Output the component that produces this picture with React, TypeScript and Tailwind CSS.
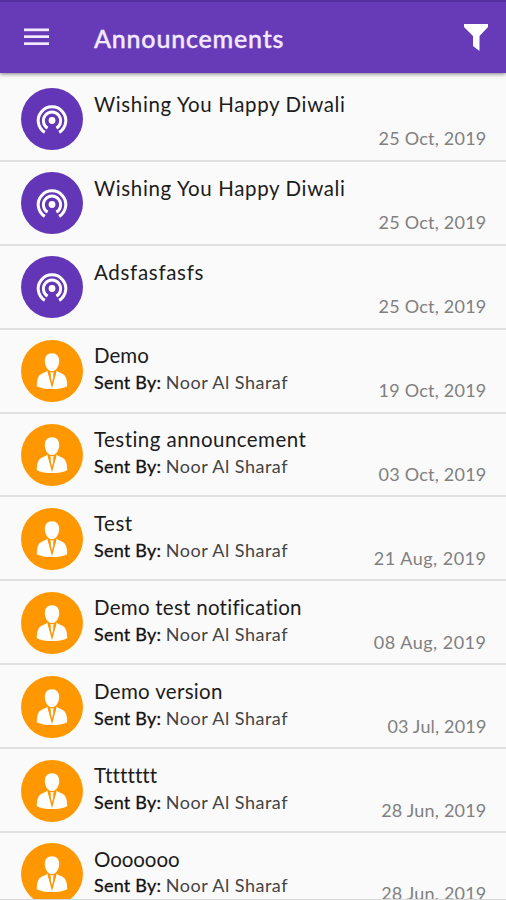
type Item = { title: string; ls: string; date: string; dls: string; sender?: string };

const sender = 'Noor Al Sharaf';

const items: Item[] = [
  { title: 'Wishing You Happy Diwali', ls: 'tracking-[0.63px]', date: '25 Oct, 2019', dls: 'tracking-[0.22px]' },
  { title: 'Wishing You Happy Diwali', ls: 'tracking-[0.63px]', date: '25 Oct, 2019', dls: 'tracking-[0.22px]' },
  { title: 'Adsfasfasfs', ls: 'tracking-[0.7px]', date: '25 Oct, 2019', dls: 'tracking-[0.22px]' },
  { title: 'Demo', ls: 'tracking-[0.05px]', date: '19 Oct, 2019', dls: 'tracking-[0.22px]', sender },
  { title: 'Testing announcement', ls: 'tracking-[0.45px]', date: '03 Oct, 2019', dls: 'tracking-[0.22px]', sender },
  { title: 'Test', ls: 'tracking-[0.5px]', date: '21 Aug, 2019', dls: 'tracking-[0.5px]', sender },
  { title: 'Demo test notification', ls: 'tracking-[0.26px]', date: '08 Aug, 2019', dls: 'tracking-[0.5px]', sender },
  { title: 'Demo version', ls: 'tracking-[0.33px]', date: '03 Jul, 2019', dls: 'tracking-[0.17px]', sender },
  { title: 'Tttttttt', ls: 'tracking-[0.13px]', date: '28 Jun, 2019', dls: 'tracking-[0.2px]', sender },
  { title: 'Ooooooo', ls: 'tracking-[-0.07px]', date: '28 Jun, 2019', dls: 'tracking-[0.2px]', sender },
];

function BroadcastIcon() {
  return (
    <svg viewBox="0 0 62 62" className="size-[62px] shrink-0">
      <circle cx="31" cy="31" r="31" fill="#6236b6" />
      <circle cx="31" cy="32.5" r="3.4" fill="#fff" />
      <g fill="none" stroke="#fff" strokeWidth="3">
        <path d="M26.6 40.1A8.6 8.6 0 1 1 35.4 40.1" />
        <path d="M23.8 44.4A13.8 13.8 0 1 1 38.2 44.4" />
      </g>
    </svg>
  );
}

function PersonIcon() {
  return (
    <svg viewBox="0 0 62 62" className="size-[62px] shrink-0">
      <circle cx="31" cy="31" r="31" fill="#ff9800" />
      <path
        fill="#fff"
        d="M31 13.2c4.5 0 7.3 3.1 7.2 7.7-.1 5.2-3.1 10.1-7.2 10.1s-7.1-4.9-7.2-10.1c-.1-4.6 2.700-7.700 7.200-7.700z"
      />
      <path
        fill="#fff"
        d="M26.3 30.6L31 45.8l4.7-15.2c1 1.300 3 2.100 5.200 3 3.300 1.400 5.300 4.900 5.300 12.600C42.500 48.200 37 49 31 49s-11.500-.8-15.200-2.800c0-7.700 2-11.200 5.300-12.600 2.200-.9 4.200-1.700 5.200-3z"
      />
      <path fill="#fff" d="M29.2 32.2h3.6l-.7 2.300 1 6.500L31 45.800 28.900 41l1-6.500z" />
      <path fill="none" stroke="#ff9800" strokeWidth="1.5" d="M27.3 31.5L31 45.3l3.700-13.800" />
    </svg>
  );
}

function Row({ item }: { item: Item }) {
  return (
    <li className="flex h-[83.9px] shrink-0 border-b-2 border-[#e0e0e0] pl-[21px] pr-[19.5px] pt-[10.4px]">
      {item.sender ? <PersonIcon /> : <BroadcastIcon />}
      <div className="ml-[11px] flex-1 whitespace-nowrap pt-[2.4px]">
        <p className="h-[26.7px] text-[20.5px] leading-[26px] text-[#1c1c1c]">
          <span className={item.ls}>{item.title}</span>
        </p>
        {item.sender && (
          <p className="text-[18px] leading-[26px] text-[#444]">
            <span className="tracking-[0.22px] text-[#111] [-webkit-text-stroke:0.3px_#111]">Sent By:</span>{' '}
            <span className="tracking-[0.5px]">{item.sender}</span>
          </p>
        )}
      </div>
      <time className="mt-[38px] h-6 whitespace-nowrap text-[18px] leading-6 text-[#808080]">
        <span className={item.dls}>{item.date}</span>
      </time>
    </li>
  );
}

export default function App() {
  return (
    <div className="flex h-[900px] w-[506px] flex-col overflow-hidden bg-[#fafafa] font-['Lato',sans-serif]">
      <header className="z-10 shrink-0 bg-[#673ab7] shadow-[0_1px_4px_rgba(0,0,0,0.5)]">
        <div className="flex h-[73px] items-center border-t-2 border-[#56309c] pr-[18px] pb-px pl-6">
          <svg viewBox="0 0 25 18" className="h-[18px] w-[25px]" fill="#f3eaff">
            <rect y="0.5" width="25" height="2.7" />
            <rect y="7.3" width="25" height="2.7" />
            <rect y="14.3" width="25" height="2.7" />
          </svg>
          <h1 className="ml-[45px] flex-1 pt-0.5 text-[25px] leading-8 font-medium text-[#f3eaff] [-webkit-text-stroke:0.4px_#f3eaff]">
            <span className="tracking-[0.8px]">Announcements</span>
          </h1>
          <svg viewBox="0 0 24 27" className="h-[27px] w-6" fill="#fff">
            <path d="M0 0h24v3l-8.500 9v15L9 22V12L0 3z" />
          </svg>
        </div>
      </header>
      <ul className="flex flex-1 flex-col overflow-hidden pt-[5px]">
        {items.map((item, i) => (
          <Row key={i} item={item} />
        ))}
      </ul>
      <div className="h-px shrink-0 bg-[#d8d8d8]" />
    </div>
  );
}
